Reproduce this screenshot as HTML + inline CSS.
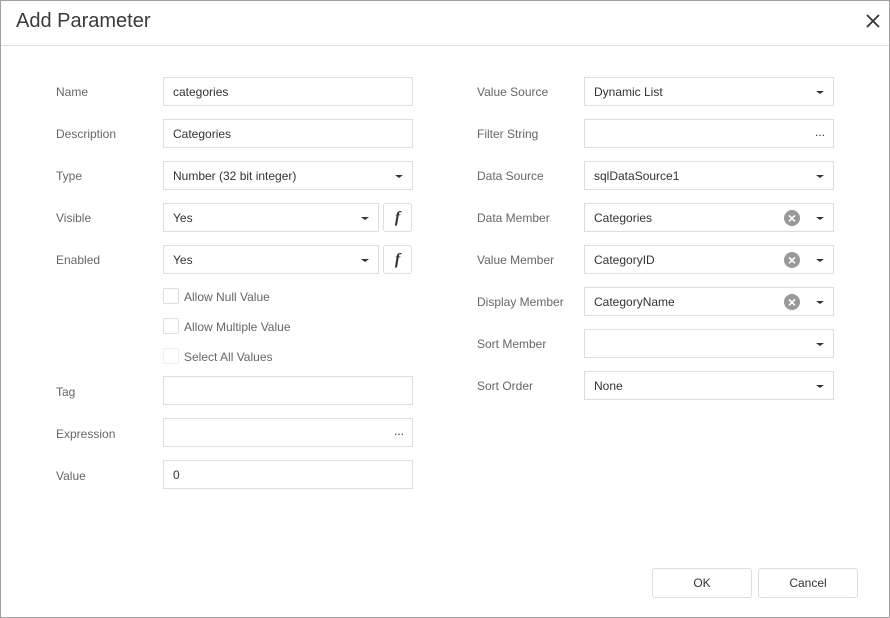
<!DOCTYPE html>
<html><head><style>
*{box-sizing:border-box;margin:0;padding:0}
body{width:890px;height:618px;background:#fff;font-family:"Liberation Sans",sans-serif;position:relative;overflow:hidden}
.frame{position:absolute;left:0;top:0;width:890px;height:618px;border:1px solid #a0a0a0}
.title{position:absolute;left:16px;top:10px;font-size:20px;color:#3a3a3a}
.close{position:absolute;left:866px;top:14px}
.hr{position:absolute;left:1px;right:1px;top:45px;height:1px;background:#ddd}
.lbl{position:absolute;font-size:12px;color:#666}
.inp{position:absolute;height:29px;border:1px solid #ddd;font-size:12px;color:#333;padding:0 9px;line-height:28px}
.arr{position:absolute;right:9px;top:13px;width:0;height:0;border-left:4px solid transparent;border-right:4px solid transparent;border-top:3.5px solid #333}
.dots{position:absolute;right:8px;top:-2px;font-size:12px;color:#333;letter-spacing:0}
.clr{position:absolute;right:33px;top:6px;width:16px;height:16px;border-radius:50%;background:#999;color:#fff;font-size:14px;line-height:16px;text-align:center;font-weight:bold}
.fb{position:absolute;width:29px;height:29px;border:1px solid #ddd;border-radius:3px;font-family:"Liberation Serif",serif;font-style:italic;font-weight:bold;font-size:16px;text-align:center;line-height:27px;color:#333}
.cb{position:absolute;left:163px;width:16px;height:16px;border:1px solid #ddd;border-radius:2px}
.cbl{position:absolute;left:184px;font-size:12px;color:#666}
.btn{position:absolute;top:568px;height:30px;border:1px solid #ddd;border-radius:3px;font-size:12px;color:#333;text-align:center;line-height:28px}
</style></head><body>
<div class="frame"></div>
<div class="title">Add Parameter</div>
<svg class="close" width="14" height="14" viewBox="0 0 14 14"><path d="M1 1L13 13M13 1L1 13" stroke="#333" stroke-width="1.8"/></svg>
<div class="hr"></div>

<div class="lbl" style="left:56px;top:85px">Name</div>
<div class="inp" style="left:163px;top:77px;width:250px">categories</div>
<div class="lbl" style="left:56px;top:127px">Description</div>
<div class="inp" style="left:163px;top:119px;width:250px">Categories</div>
<div class="lbl" style="left:56px;top:169px">Type</div>
<div class="inp" style="left:163px;top:161px;width:250px">Number (32 bit integer)<span class="arr"></span></div>
<div class="lbl" style="left:56px;top:211px">Visible</div>
<div class="inp" style="left:163px;top:203px;width:216px">Yes<span class="arr"></span></div>
<div class="fb" style="left:383px;top:203px">f</div>
<div class="lbl" style="left:56px;top:253px">Enabled</div>
<div class="inp" style="left:163px;top:245px;width:216px">Yes<span class="arr"></span></div>
<div class="fb" style="left:383px;top:245px">f</div>

<div class="cb" style="top:288px"></div><div class="cbl" style="top:290px">Allow Null Value</div>
<div class="cb" style="top:318px"></div><div class="cbl" style="top:320px">Allow Multiple Value</div>
<div class="cb" style="top:348px;border-color:#eee"></div><div class="cbl" style="top:350px">Select All Values</div>

<div class="lbl" style="left:56px;top:385px">Tag</div>
<div class="inp" style="left:163px;top:376px;width:250px"></div>
<div class="lbl" style="left:56px;top:427px">Expression</div>
<div class="inp" style="left:163px;top:418px;width:250px"><span class="dots">...</span></div>
<div class="lbl" style="left:56px;top:469px">Value</div>
<div class="inp" style="left:163px;top:460px;width:250px">0</div>

<div class="lbl" style="left:477px;top:85px">Value Source</div>
<div class="inp" style="left:584px;top:77px;width:250px">Dynamic List<span class="arr"></span></div>
<div class="lbl" style="left:477px;top:127px">Filter String</div>
<div class="inp" style="left:584px;top:119px;width:250px"><span class="dots">...</span></div>
<div class="lbl" style="left:477px;top:169px">Data Source</div>
<div class="inp" style="left:584px;top:161px;width:250px">sqlDataSource1<span class="arr"></span></div>
<div class="lbl" style="left:477px;top:211px">Data Member</div>
<div class="inp" style="left:584px;top:203px;width:250px">Categories<span class="clr">×</span><span class="arr"></span></div>
<div class="lbl" style="left:477px;top:253px">Value Member</div>
<div class="inp" style="left:584px;top:245px;width:250px">CategoryID<span class="clr">×</span><span class="arr"></span></div>
<div class="lbl" style="left:477px;top:295px">Display Member</div>
<div class="inp" style="left:584px;top:287px;width:250px">CategoryName<span class="clr">×</span><span class="arr"></span></div>
<div class="lbl" style="left:477px;top:337px">Sort Member</div>
<div class="inp" style="left:584px;top:329px;width:250px"><span class="arr"></span></div>
<div class="lbl" style="left:477px;top:379px">Sort Order</div>
<div class="inp" style="left:584px;top:371px;width:250px">None<span class="arr"></span></div>

<div class="btn" style="left:652px;width:100px">OK</div>
<div class="btn" style="left:758px;width:100px">Cancel</div>
</body></html>
